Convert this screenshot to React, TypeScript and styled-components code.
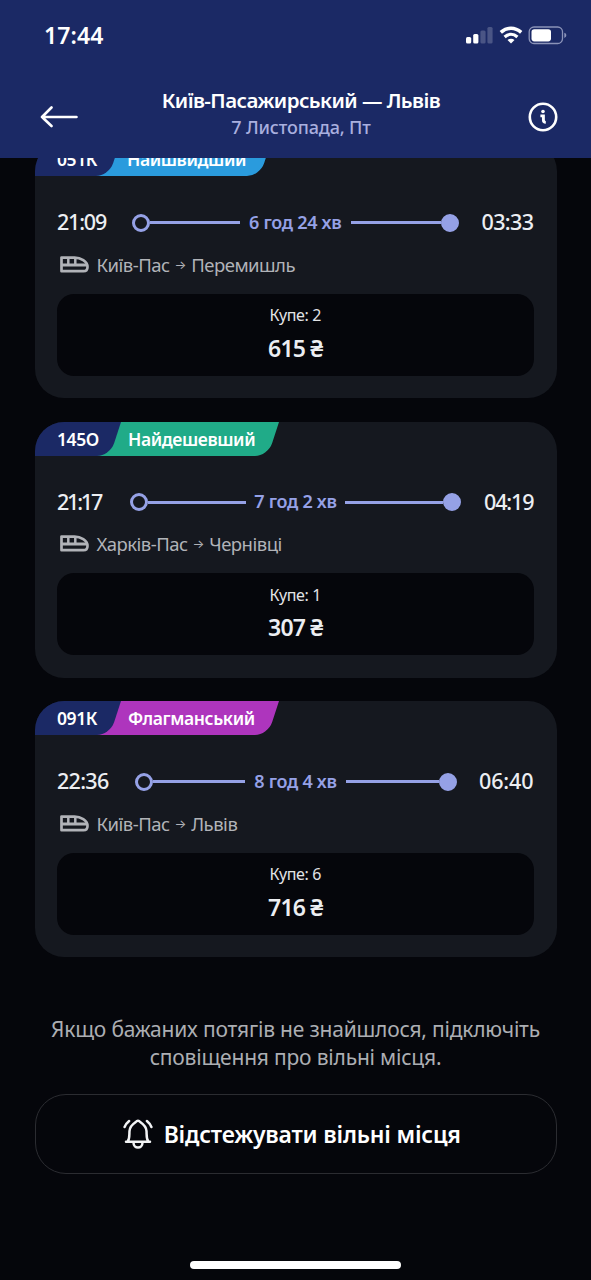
import React from "react";
import styled, { createGlobalStyle } from "styled-components";

const GlobalStyle = createGlobalStyle`
  *, *::before, *::after { box-sizing: border-box; }
  html, body { margin: 0; background: #05060b; }
  body { font-family: "Noto Sans", sans-serif; color: #eceef2; }
`;

const Screen = styled.div`
  width: 591px;
  height: 1280px;
  display: flex;
  flex-direction: column;
  overflow: hidden;
  background: #05060b;
`;

const Header = styled.header`
  flex: none;
  height: 158px;
  background: #1b2965;
  display: flex;
  flex-direction: column;
`;

const StatusBar = styled.div`
  height: 71px;
  padding: 0 24px 0 44px;
  display: flex;
  align-items: center;
  justify-content: space-between;
`;

const Clock = styled.span`
  margin-top: -2px;
  font-size: 23px;
  font-weight: 600;
  line-height: 28px;
  letter-spacing: 0.1px;
  color: #fff;
`;

const NavBar = styled.div`
  height: 87px;
  padding: 0 33px 0 40px;
  display: flex;
  align-items: flex-start;
  justify-content: space-between;
`;

const NavButton = styled.button<{ $top: number }>`
  border: 0;
  padding: 0;
  margin-top: ${(p) => p.$top}px;
  background: none;
  display: block;
  line-height: 0;
`;

const Heading = styled.div`
  flex: 1;
  padding: 15px 5px 0 0;
  text-align: center;
  white-space: nowrap;
`;

const Title = styled.h1`
  margin: 0;
  font-size: 20.5px;
  font-weight: 600;
  line-height: 28px;
  letter-spacing: -0.56px;
  color: #fff;
`;

const Subtitle = styled.div`
  font-size: 18px;
  font-weight: 500;
  line-height: 27px;
  letter-spacing: -0.15px;
  color: #a9afdf;
`;

const Content = styled.main`
  flex: 1;
  min-height: 0;
  overflow: hidden;
  padding: 0 34.5px;
  display: flex;
  flex-direction: column;
`;

const Trips = styled.div`
  margin-top: -16px;
  display: flex;
  flex-direction: column;
  gap: 23.5px;
`;

const Card = styled.article`
  height: 256px;
  flex: none;
  overflow: hidden;
  border-radius: 29px;
  background: #15181f;
  display: flex;
  flex-direction: column;
`;

const Tabs = styled.div`
  height: 34px;
  display: flex;
`;

const Tab = styled.div<{ $color: string; $width: number; $pad: number; $z: number }>`
  position: relative;
  z-index: ${(p) => p.$z};
  width: ${(p) => p.$width}px;
  padding-left: ${(p) => p.$pad}px;
  font-size: 17.5px;
  font-weight: 600;
  line-height: 34px;
  letter-spacing: -0.4px;
  white-space: nowrap;
  color: #fff;

  &::before {
    content: "";
    position: absolute;
    z-index: -1;
    inset: 0 0 0 -40px;
    background: ${(p) => p.$color};
    border-bottom-right-radius: 13px;
    transform: skewX(-18deg);
    transform-origin: top right;
  }
`;

const Schedule = styled.div`
  height: 93px;
  padding: 0 23px 0 22.5px;
  display: flex;
  align-items: center;
`;

const Time = styled.span<{ $width: number; $tracking: number; $end?: boolean }>`
  flex: none;
  width: ${(p) => p.$width}px;
  margin-top: -2px;
  text-align: ${(p) => (p.$end ? "right" : "left")};
  font-size: 21.5px;
  font-weight: 500;
  letter-spacing: ${(p) => p.$tracking}px;
`;

const Track = styled.div`
  flex: 1;
  display: flex;
  align-items: center;
`;

const Stop = styled.span<{ $filled?: boolean }>`
  width: 18px;
  height: 18px;
  border-radius: 50%;
  border: 3px solid #95a1e6;
  background: ${(p) => (p.$filled ? "#95a1e6" : "transparent")};
`;

const Rail = styled.span`
  flex: 1;
  height: 3px;
  background: #95a1e6;
`;

const Duration = styled.span<{ $width: number }>`
  width: ${(p) => p.$width}px;
  margin-top: -2px;
  text-align: center;
  white-space: nowrap;
  font-size: 18px;
  font-weight: 600;
  letter-spacing: -0.3px;
  color: #95a1e6;
`;

const Route = styled.div`
  height: 24px;
  margin-top: -17px;
  padding-left: 25px;
  display: flex;
  align-items: center;
  font-size: 18.5px;
  letter-spacing: -0.5px;
  white-space: nowrap;
  color: #b1b3b8;

  svg {
    margin-right: 8px;
  }
`;

const Arrow = styled.span`
  width: 21.5px;
  text-align: center;
  font-family: Inter, sans-serif;
  font-size: 12.5px;
  letter-spacing: 0;
`;

const Seats = styled.div`
  height: 82px;
  margin: 17.5px 23px 0 22.5px;
  padding-top: 9.5px;
  border-radius: 17px;
  background: #05060b;
  display: flex;
  flex-direction: column;
  align-items: center;
`;

const SeatClass = styled.span`
  font-size: 16px;
  line-height: 24px;
  letter-spacing: -0.4px;
  color: #e2e3e6;
`;

const Price = styled.span`
  margin-top: 5.5px;
  font-size: 23px;
  font-weight: 600;
  line-height: 30px;
  letter-spacing: -0.8px;
`;

const Hint = styled.p`
  margin: 58px 0 0;
  text-align: center;
  font-size: 21px;
  line-height: 28px;
  letter-spacing: -0.2px;
  white-space: nowrap;
  color: #acaeb3;
`;

const TrackButton = styled.button`
  flex: none;
  height: 80px;
  margin: 23px 0 0;
  padding: 0 7px 0 0;
  border: 1.5px solid #2b2c31;
  border-radius: 31px;
  background: none;
  display: flex;
  align-items: center;
  justify-content: center;
  gap: 10.5px;
  font-family: inherit;
  font-size: 23px;
  font-weight: 600;
  letter-spacing: -0.2px;
  color: #fff;
`;

const HomeIndicator = styled.div`
  flex: none;
  align-self: center;
  width: 211px;
  height: 8px;
  margin: 0 0 11px;
  border-radius: 4px;
  background: #fff;
`;

const StatusIcons = () => (
  <svg width="102" height="20" viewBox="0 0 102 20" fill="none">
    <rect x="1" y="11" width="5.2" height="6.5" rx="1.5" fill="#fff" />
    <rect x="8.2" y="8" width="5.2" height="9.5" rx="1.5" fill="#fff" />
    <rect x="15.4" y="4.5" width="5.2" height="13" rx="1.5" fill="#4a5585" />
    <rect x="22.4" y="1" width="5.2" height="16.5" rx="1.5" fill="#4a5585" />
    <path d="M35.8 6.4C42 .9 50 .9 56.200 6.400" stroke="#fff" strokeWidth="3.500" />
    <path d="M39.600 10.900C43.500 7.500 48.500 7.500 52.400 10.900" stroke="#fff" strokeWidth="3.300" />
    <path d="M42.500 13.900C44.500 12.300 47.500 12.300 49.500 13.900L46 17.600Z" fill="#fff" />
    <rect x="64.200" y="1" width="33.300" height="16.500" rx="4.800" stroke="#8b93b8" strokeWidth="1.300" />
    <rect x="66.500" y="3.200" width="19.500" height="12.200" rx="2.800" fill="#fff" />
    <path d="M99.300 6.700c1.600.6 2 1.500 2 2.600s-.4 2-2 2.600z" fill="#8b93b8" />
  </svg>
);

const BackIcon = () => (
  <svg width="39" height="22" viewBox="0 0 39 22" fill="none" stroke="#fff" strokeWidth="2.600" strokeLinecap="round" strokeLinejoin="round">
    <path d="M36.500 11H2M11.500 1.500 2 11l9.500 9" />
  </svg>
);

const InfoIcon = () => (
  <svg width="30" height="30" viewBox="0 0 30 30" fill="none" stroke="#fff">
    <circle cx="15" cy="15" r="13.200" strokeWidth="2.600" />
    <circle cx="15" cy="9.500" r="1.800" fill="#fff" stroke="none" />
    <path d="M12.400 13.900h3v4.200q0 2.300 2.400 2.300" strokeWidth="2.900" />
  </svg>
);

const TrainIcon = () => (
  <svg width="29" height="17" viewBox="0 0 29 17" fill="none" stroke="#b1b3b8" strokeWidth="2.700" strokeLinejoin="round">
    <path d="M1.500 1.600H14.500C20.500 1.600 27.500 5.500 27.500 11C27.500 14 26 15.200 23.500 15.200H1.500Z" />
    <path d="M1.500 9H26.500" strokeWidth="3" />
    <path d="M8.300 1.500V8.800M15.300 1.500V8.800" strokeWidth="2.500" />
  </svg>
);

const BellIcon = () => (
  <svg width="30" height="30" viewBox="0 0 30 30" fill="none" stroke="#f2f3f5" strokeWidth="2.500" strokeLinecap="round" strokeLinejoin="round">
    <path d="M3 22.700H27M4.800 22.300C6.800 19.500 6.200 16 6.500 12C6.900 7.500 9.500 5.300 12.500 3.300Q15 .4 17.500 3.300C20.500 5.300 23.100 7.500 23.500 12C23.800 16 23.200 19.500 25.200 22.300" />
    <path d="M10.500 23.500C10.500 30.300 19.500 30.300 19.500 23.500M1.600 8Q3 4.500 6.100 2M28.400 8Q27 4.500 23.900 2" />
  </svg>
);

const trips = [
  {
    code: "051К", codeWidth: 85, label: "Найшвидший", labelWidth: 150.5, color: "#2a9bdd",
    depart: { time: "21:09", width: 75, tracking: -1.2 },
    arrive: { time: "03:33", width: 75, tracking: -0.6 },
    duration: "6 год 24 хв", durationWidth: 111,
    from: "Київ-Пас", to: "Перемишль", seats: 2, price: 615,
  },
  {
    code: "145О", codeWidth: 86, label: "Найдешевший", labelWidth: 158, color: "#20ab88",
    depart: { time: "21:17", width: 73, tracking: -2.2 },
    arrive: { time: "04:19", width: 72.5, tracking: -1.1 },
    duration: "7 год 2 хв", durationWidth: 99,
    from: "Харків-Пас", to: "Чернівці", seats: 1, price: 307,
  },
  {
    code: "091К", codeWidth: 86, label: "Флагманський", labelWidth: 158, color: "#ae35bd",
    depart: { time: "22:36", width: 77.5, tracking: -0.7 },
    arrive: { time: "06:40", width: 77, tracking: -0.1 },
    duration: "8 год 4 хв", durationWidth: 101,
    from: "Київ-Пас", to: "Львів", seats: 6, price: 716,
  },
];

export default function App() {
  return (
    <Screen>
      <GlobalStyle />
      <Header>
        <StatusBar>
          <Clock>17:44</Clock>
          <StatusIcons />
        </StatusBar>
        <NavBar>
          <NavButton $top={35} aria-label="Назад"><BackIcon /></NavButton>
          <Heading>
            <Title>Київ-Пасажирський — Львів</Title>
            <Subtitle>7 Листопада, Пт</Subtitle>
          </Heading>
          <NavButton $top={31} aria-label="Інформація"><InfoIcon /></NavButton>
        </NavBar>
      </Header>
      <Content>
        <Trips>
          {trips.map((t) => (
            <Card key={t.code}>
              <Tabs>
                <Tab $color="#1b2965" $width={t.codeWidth} $pad={22.5} $z={2}>{t.code}</Tab>
                <Tab $color={t.color} $width={t.labelWidth} $pad={7.5} $z={1}>{t.label}</Tab>
              </Tabs>
              <Schedule>
                <Time $width={t.depart.width} $tracking={t.depart.tracking}>{t.depart.time}</Time>
                <Track>
                  <Stop />
                  <Rail />
                  <Duration $width={t.durationWidth}>{t.duration}</Duration>
                  <Rail />
                  <Stop $filled />
                </Track>
                <Time $width={t.arrive.width} $tracking={t.arrive.tracking} $end>{t.arrive.time}</Time>
              </Schedule>
              <Route>
                <TrainIcon />
                <span>{t.from}</span>
                <Arrow>→</Arrow>
                <span>{t.to}</span>
              </Route>
              <Seats>
                <SeatClass>Купе: {t.seats}</SeatClass>
                <Price>{t.price} ₴</Price>
              </Seats>
            </Card>
          ))}
        </Trips>
        <Hint>
          Якщо бажаних потягів не знайшлося, підключіть
          <br />
          сповіщення про вільні місця.
        </Hint>
        <TrackButton>
          <BellIcon />
          Відстежувати вільні місця
        </TrackButton>
      </Content>
      <HomeIndicator />
    </Screen>
  );
}
